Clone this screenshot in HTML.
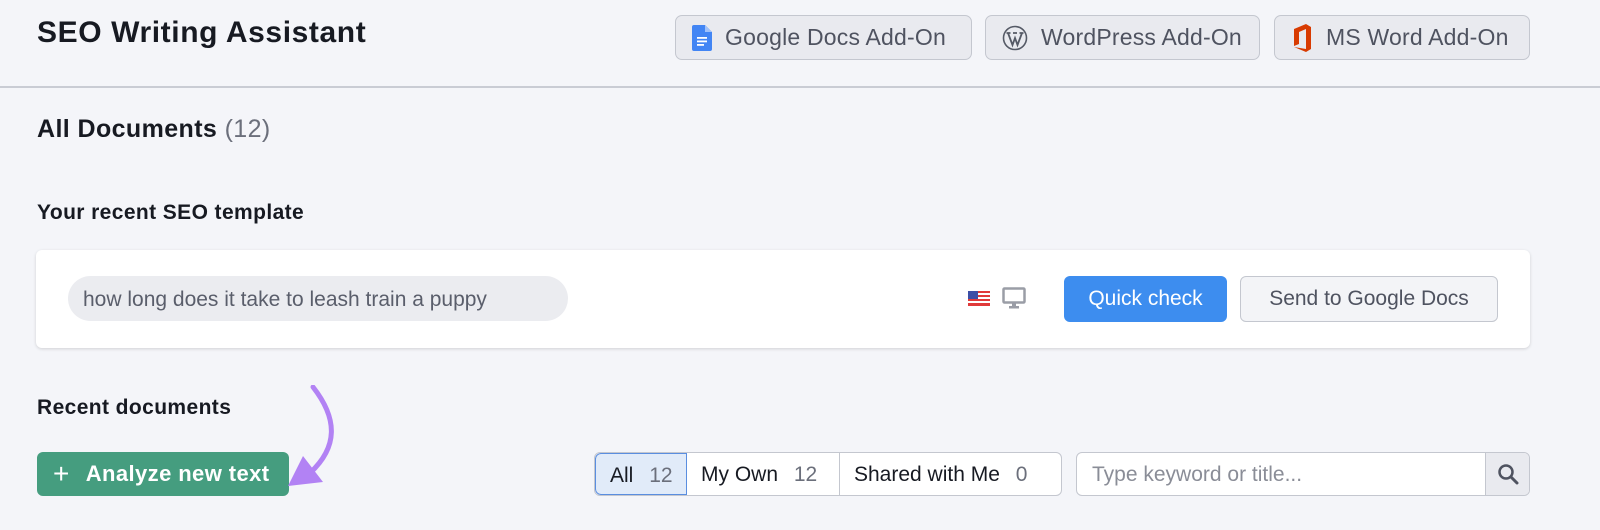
<!DOCTYPE html>
<html><head><meta charset="utf-8"><style>
*{box-sizing:border-box;margin:0;padding:0}
body{width:1600px;height:530px;background:#f4f5f9;font-family:"Liberation Sans",Arial,sans-serif;position:relative;overflow:hidden;color:#171a22}
.abs{position:absolute}
h1{position:absolute;left:37px;top:16px;font-size:30px;font-weight:bold;letter-spacing:0.6px}
.hb{position:absolute;top:15px;height:45px;border:1px solid #c4c7cf;border-radius:7px;background:#e9eaef;font-size:23px;color:#4f5360;display:flex;align-items:center;padding-left:16px;gap:13px;letter-spacing:0.2px}
.line{position:absolute;left:0;top:86px;width:1600px;height:2px;background:#c9ccd4}
.h2{position:absolute;font-weight:bold;font-size:22px;letter-spacing:0.4px}
.card{position:absolute;left:36px;top:250px;width:1494px;height:98px;background:#fff;border-radius:6px;box-shadow:0 1px 3px rgba(0,0,0,.15)}
.pill{position:absolute;left:32px;top:26px;height:45px;width:500px;border-radius:23px;background:#ebecf0;font-size:21px;color:#5a5e6b;padding:12px 0 0 15px}
.btn{position:absolute;border-radius:6px;font-size:21px;display:flex;align-items:center;justify-content:center}
</style></head><body>
<h1>SEO Writing Assistant</h1>
<div class="hb" style="left:675px;width:297px">
<svg width="20" height="26" viewBox="0 0 20 26"><path d="M2 0h11l7 7v17a2 2 0 0 1-2 2H2a2 2 0 0 1-2-2V2a2 2 0 0 1 2-2z" fill="#4285f4"/><path d="M13 0v7h7z" fill="#a1c2fa"/><rect x="5" y="12" width="10" height="1.8" fill="#fff"/><rect x="5" y="15.5" width="10" height="1.8" fill="#fff"/><rect x="5" y="19" width="7" height="1.8" fill="#fff"/></svg>Google Docs Add-On</div>
<div class="hb" style="left:985px;width:275px">
<svg width="26" height="26" viewBox="0 0 26 26"><circle cx="13" cy="13" r="11.5" fill="none" stroke="#555a66" stroke-width="1.6"/><path d="M6 8l4.5 12 2.5-7 2.5 7L20 8M4.5 8h4M11 8h4M17.5 8h4" fill="none" stroke="#555a66" stroke-width="1.8"/></svg>WordPress Add-On</div>
<div class="hb" style="left:1274px;width:256px">
<svg width="22" height="28" viewBox="0 0 22 28"><path d="M3 5l12-5 5 3v22l-5 3-12-5 12 2V5L8 8v12l-5 2z" fill="#d83b01"/></svg>MS Word Add-On</div>
<div class="line"></div>
<div class="h2" style="left:37px;top:115px;font-size:25px">All Documents <span style="font-weight:normal;color:#6b6f7b">(12)</span></div>
<div class="h2" style="left:37px;top:201px;font-size:21px">Your recent SEO template</div>
<div class="card">
<div class="pill">how long does it take to leash train a puppy</div>
<svg class="abs" style="left:932px;top:41px" width="22" height="15" viewBox="0 0 22 15"><rect width="22" height="15" fill="#e03a3a"/><rect y="2" width="22" height="2" fill="#fff"/><rect y="6" width="22" height="2" fill="#fff"/><rect y="10" width="22" height="2" fill="#fff"/><rect width="10" height="8" fill="#3c4fa6"/></svg>
<svg class="abs" style="left:966px;top:37px" width="24" height="22" viewBox="0 0 24 22"><rect x="1.5" y="1.5" width="21" height="14" rx="1" fill="none" stroke="#9a9da6" stroke-width="2.5"/><rect x="10" y="16" width="4" height="3" fill="#9a9da6"/><rect x="7" y="19" width="10" height="2.5" fill="#9a9da6"/></svg>
<div class="btn" style="left:1028px;top:26px;width:163px;height:46px;background:#3d8def;color:#fff">Quick check</div>
<div class="btn" style="left:1204px;top:26px;width:258px;height:46px;background:#f3f4f7;border:1px solid #c4c7cf;color:#4f5360">Send to Google Docs</div>
</div>
<div class="h2" style="left:37px;top:396px;font-size:21px">Recent documents</div>
<div class="btn" style="left:37px;top:452px;width:252px;height:44px;background:#459d7f;color:#fff;justify-content:flex-start;padding-left:16px;font-weight:bold;font-size:22px;letter-spacing:0.4px">
<span style="font-size:28px;font-weight:normal;margin-right:16px">+</span>Analyze new text</div>
<svg class="abs" style="left:280px;top:385px" width="60" height="110" viewBox="0 0 60 110"><path d="M33 2C58 34 58 62 30 88" fill="none" stroke="#b282f4" stroke-width="5" stroke-linecap="round"/><path d="M8 101L23 71L43 97z" fill="#b282f4"/></svg>
<div class="abs" style="left:594px;top:452px;width:468px;height:44px;border:1px solid #c4c7cf;border-radius:6px;background:#fff;display:flex;font-size:21px;overflow:hidden">
<div style="width:92px;background:#e1ebf9;border:1px solid #5a8ee0;border-radius:6px 0 0 6px;padding:10px 0 0 14px">All <span style="color:#6b6f7b;margin-left:10px">12</span></div>
<div style="width:153px;border-right:1px solid #c4c7cf;padding:10px 0 0 14px">My Own <span style="color:#6b6f7b;margin-left:10px">12</span></div>
<div style="padding:10px 0 0 14px">Shared with Me <span style="color:#6b6f7b;margin-left:10px">0</span></div>
</div>
<div class="abs" style="left:1076px;top:452px;width:454px;height:44px;border:1px solid #c4c7cf;border-radius:6px;background:#fff;overflow:hidden">
<div class="abs" style="left:15px;top:10px;font-size:21px;color:#8a8d97">Type keyword or title...</div>
<div class="abs" style="left:408px;top:0;width:46px;height:44px;background:#e9eaef;border-left:1px solid #c4c7cf"></div>
<svg class="abs" style="left:420px;top:10px" width="22" height="22" viewBox="0 0 22 22"><circle cx="9" cy="9" r="6.5" fill="none" stroke="#4f5360" stroke-width="2.5"/><path d="M14 14l6 6" stroke="#4f5360" stroke-width="3" stroke-linecap="round"/></svg>
</div>
</body></html>
